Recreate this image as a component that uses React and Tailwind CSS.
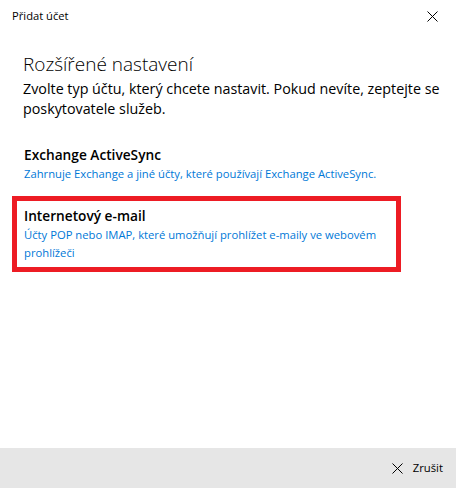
export default function App() {
  return (
    <div
      className="w-[456px] h-[488px] bg-white flex flex-col text-black"
      style={{ fontFamily: '"Open Sans", "Noto Sans", sans-serif' }}
    >
      <div className="h-[32px] flex items-center justify-between pl-[12px] pr-[18px]">
        <span className="text-[11.2px]">Přidat účet</span>
        <svg width="11" height="11" viewBox="0 0 11 11" className="text-black">
          <path d="M0.5 0.5 L10.5 10.5 M10.5 0.5 L0.5 10.5" stroke="currentColor" strokeWidth="1" />
        </svg>
      </div>

      <div className="flex-1 pl-[23px] pr-[12px] pt-[18px]">
        <h1 className="text-[19px] font-light leading-[28px]">Rozšířené nastavení</h1>
        <p className="text-[14.3px] leading-[20px] mt-[1px] pr-[2px]">
          Zvolte typ účtu, který chcete nastavit. Pokud nevíte, zeptejte se poskytovatele služeb.
        </p>

        {/* unselected option keeps a transparent border so both rows line up */}
        <div className="mt-[16px] -ml-[11px] w-[389px] border-[5px] border-transparent px-[7px] py-[5px]">
          <div className="text-[13.7px] font-semibold leading-[20px]">Exchange ActiveSync</div>
          <div className="text-[11.25px] leading-[18px] text-[#0078d7] whitespace-nowrap">
            Zahrnuje Exchange a jiné účty, které používají Exchange ActiveSync.
          </div>
        </div>

        <div className="mt-[3px] -ml-[11px] w-[389px] border-[5px] border-[#ed1c24] px-[7px] pt-[5px] pb-[5px]">
          <div className="text-[13.7px] font-semibold leading-[20px]">Internetový e-mail</div>
          <div className="text-[11.25px] leading-[18px] text-[#0078d7]">
            Účty POP nebo IMAP, které umožňují prohlížet e-maily ve webovém prohlížeči
          </div>
        </div>
      </div>

      <div className="h-[40px] bg-[#e6e6e6] flex items-center justify-end pr-[13px] gap-[10px]">
        <svg width="11" height="11" viewBox="0 0 11 11">
          <path d="M0.5 0.5 L10.5 10.5 M10.5 0.5 L0.5 10.5" stroke="black" strokeWidth="1" />
        </svg>
        <span className="text-[11.3px]">Zrušit</span>
      </div>
    </div>
  );
}
